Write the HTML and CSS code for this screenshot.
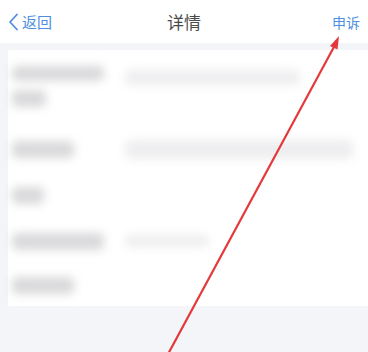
FILE: index.html
```html
<!DOCTYPE html>
<html lang="zh">
<head>
<meta charset="utf-8">
<link rel="stylesheet" href="styles.css">
</head>
<body>
<div class="page">
  <header class="nav">
    <div class="back">
      <svg class="chev" width="11" height="18" viewBox="0 0 11 18"><path d="M9 1.5 L2 9 L9 16.5" fill="none" stroke="#4d8fe0" stroke-width="1.8" stroke-linecap="round" stroke-linejoin="round"/></svg>
      <span>返回</span>
    </div>
    <div class="title">详情</div>
    <div class="action">申诉</div>
  </header>
  <div class="gap"></div>
  <section class="card">
    <div class="row r1">
      <div class="label">
        <div class="blob b-l1a"></div>
        <div class="blob b-l1b"></div>
      </div>
      <div class="value"><div class="blob light b-v1"></div></div>
    </div>
    <div class="row r2">
      <div class="label"><div class="blob b-l2"></div></div>
      <div class="value"><div class="blob light b-v2"></div></div>
    </div>
    <div class="row r3">
      <div class="label"><div class="blob b-l3"></div></div>
    </div>
    <div class="row r4">
      <div class="label"><div class="blob b-l4"></div></div>
      <div class="value"><div class="blob light b-v4"></div></div>
    </div>
    <div class="row r5">
      <div class="label"><div class="blob b-l5"></div></div>
    </div>
  </section>
  <svg class="arrow" width="368" height="352" viewBox="0 0 368 352">
    <line x1="167" y1="356" x2="335" y2="45" stroke="#e5383b" stroke-width="2.2"/>
    <path d="M339 36 L330 46 L337.5 49.5 Z" fill="#e5383b"/>
  </svg>
</div>
</body>
</html>
```

FILE: styles.css
```css
html, body {
  margin: 0;
  padding: 0;
  background: #f4f5f8;
}
.page {
  position: relative;
  width: 368px;
  height: 352px;
  overflow: hidden;
  font-family: "Noto Sans CJK SC", "Noto Sans", sans-serif;
}
.nav {
  height: 43px;
  background: #fff;
  display: flex;
  align-items: center;
  justify-content: space-between;
  padding: 0 8px 0 8px;
  position: relative;
}
.back {
  display: flex;
  align-items: center;
  gap: 3px;
  color: #4d8fe0;
  font-size: 15px;
}
.title {
  position: absolute;
  left: 0;
  right: 0;
  text-align: center;
  font-size: 17px;
  color: #4a4a4a;
  pointer-events: none;
}
.action {
  color: #4d8fe0;
  font-size: 14px;
}
.gap {
  height: 7px;
}
.card {
  background: #fff;
  margin-left: 8px;
  height: 256px;
  display: flex;
  flex-direction: column;
}
.row {
  display: flex;
  padding-left: 4px;
}
.label {
  width: 113px;
  display: flex;
  flex-direction: column;
}
.value {
  flex: 1;
}
.blob {
  background: #d9d9db;
  border-radius: 5px;
  filter: blur(5px);
}
.blob.light {
  background: #eeeef0;
}
.r1 { height: 75px; padding-top: 14px; box-sizing: border-box; }
.b-l1a { width: 92px; height: 15px; margin-top: 2px; }
.b-l1b { width: 34px; height: 17px; margin-top: 9px; }
.b-v1 { width: 175px; height: 15px; margin-top: 6px; }
.r2 { height: 48px; align-items: center; }
.b-l2 { width: 62px; height: 17px; }
.b-v2 { width: 228px; height: 19px; }
.r3 { height: 44px; align-items: center; }
.b-l3 { width: 32px; height: 17px; }
.r4 { height: 48px; align-items: center; }
.b-l4 { width: 92px; height: 17px; }
.b-v4 { width: 84px; height: 12px; }
.r5 { height: 41px; align-items: center; }
.b-l5 { width: 62px; height: 17px; }
.arrow {
  position: absolute;
  left: 0;
  top: 0;
}
```
